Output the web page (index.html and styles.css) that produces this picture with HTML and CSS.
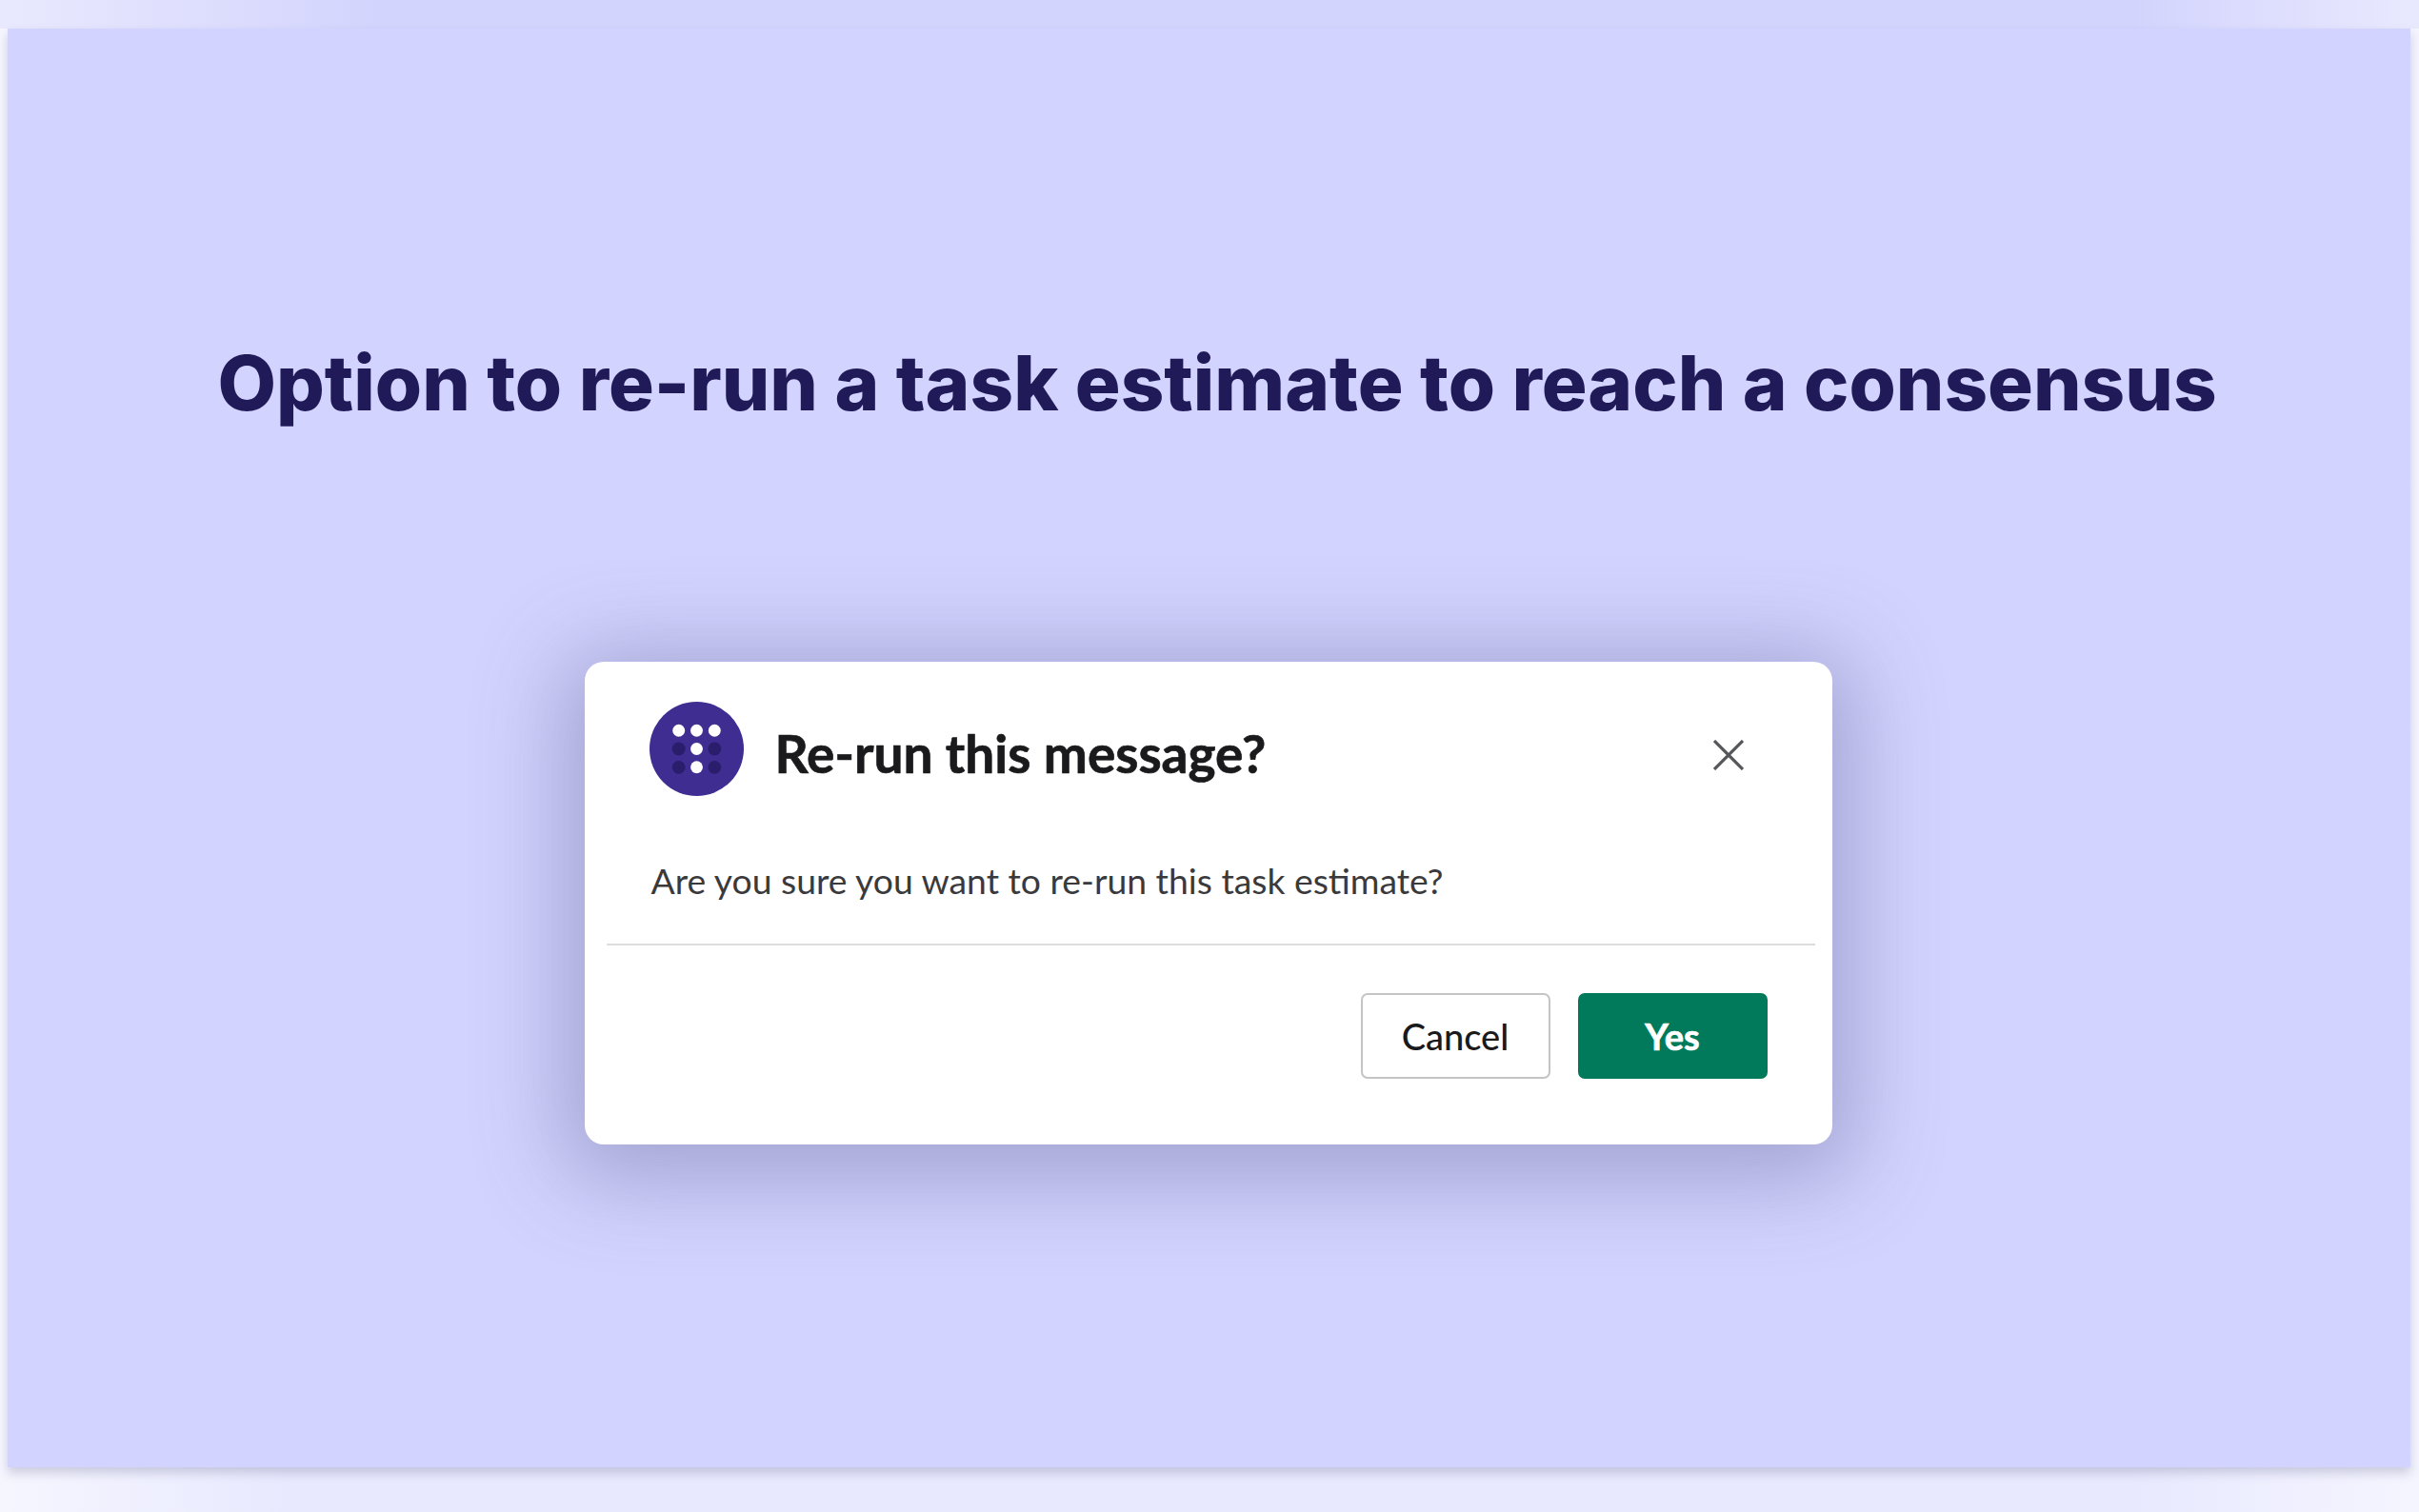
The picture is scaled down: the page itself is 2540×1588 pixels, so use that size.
FILE: index.html
```html
<!DOCTYPE html>
<html lang="en">
<head>
    <meta charset="UTF-8">
    <title>Re-run task estimate</title>
    <link rel="stylesheet" href="styles.css">
</head>
<body>
    <main class="panel">
        <h1 class="headline">Option to re-run a task estimate to reach a consensus</h1>

        <div class="dialog">
            <div class="dialog-head">
                <svg class="avatar" viewBox="0 0 100 100" aria-hidden="true">
                    <circle cx="50" cy="50" r="50" fill="#3f2d92"/>
                    <circle cx="31" cy="30.5" r="6.5" fill="#fff"/>
                    <circle cx="50" cy="30.5" r="6.5" fill="#fff"/>
                    <circle cx="69" cy="30.5" r="6.5" fill="#fff"/>
                    <circle cx="31" cy="50" r="7" fill="#2a1d6b"/>
                    <circle cx="50" cy="50" r="6.5" fill="#fff"/>
                    <circle cx="69" cy="50" r="7" fill="#2a1d6b"/>
                    <circle cx="31" cy="69.5" r="7" fill="#2a1d6b"/>
                    <circle cx="50" cy="69.5" r="6.5" fill="#fff"/>
                    <circle cx="69" cy="69.5" r="7" fill="#2a1d6b"/>
                </svg>
                <h2 class="dialog-title">Re-run this message?</h2>
                <svg class="close" viewBox="0 0 32 32" aria-hidden="true">
                    <path d="M1 1 L31 31 M31 1 L1 31" stroke="#55565a" stroke-width="3.2" fill="none"/>
                </svg>
            </div>
            <p class="dialog-text">Are you sure you want to re-run this task estimate?</p>
            <hr class="divider">
            <div class="buttons">
                <button class="btn btn-cancel" type="button">Cancel</button>
                <button class="btn btn-yes" type="button">Yes</button>
            </div>
        </div>
    </main>
</body>
</html>
```

FILE: styles.css
```css
html, body {
    height: 100%;
}
body {
    margin: 0;
    padding: 30px 9px 47px 8px;
    box-sizing: border-box;
    background: #f0f0fe;
    background-image:
        linear-gradient(to right, #e9e9fe 0, #d3d4fd 400px, #d3d4fd 2240px, #e9e9fe 2540px),
        linear-gradient(to right, #f6f6ff 0, #e8e9fe 300px, #e8e9fe 2240px, #f5f5ff 2540px);
    background-size: 100% 30px, 100% 100%;
    background-repeat: no-repeat;
    overflow: hidden;
}
.panel {
    height: 100%;
    background: #d2d3fe;
    box-shadow: 0 6px 10px rgba(110, 112, 150, 0.3);
    display: flex;
    flex-direction: column;
    align-items: center;
}
.headline {
    margin: 324px 0 0 17px;
    font-family: Inter, sans-serif;
    font-size: 79.7px;
    line-height: 96px;
    font-weight: 800;
    color: #201b58;
    white-space: nowrap;
}
.dialog {
    width: 1310px;
    height: 507px;
    margin: 245px 2px 0 0;
    box-sizing: border-box;
    padding: 42px 23px 0;
    background: #fff;
    border-radius: 20px;
    box-shadow: 0 14px 90px 24px rgba(100, 100, 150, 0.42);
    font-family: Lato, sans-serif;
}
.dialog-head {
    display: flex;
    align-items: center;
    padding: 0 70px 0 45px;
}
.avatar {
    width: 99px;
    height: 99px;
    flex: none;
}
.dialog-title {
    flex: 1;
    margin: 9px 0 0 33px;
    font-size: 55px;
    line-height: 64px;
    font-weight: 700;
    color: #1a1a1c;
    -webkit-text-stroke: 0.7px #1a1a1c;
}
.close {
    width: 32px;
    height: 32px;
    flex: none;
    margin-top: 12px;
}
.dialog-text {
    margin: 65px 0 0 47px;
    font-size: 37.3px;
    line-height: 48px;
    font-weight: 400;
    color: #3a3a3d;
}
.divider {
    margin: 42px -5px 0 0;
    border: none;
    border-top: 2px solid #dddddf;
}
.buttons {
    display: flex;
    justify-content: flex-end;
    gap: 29px;
    margin-top: 50px;
    padding-right: 45px;
}
.btn {
    width: 199px;
    height: 90px;
    border-radius: 7px;
    font-family: Lato, sans-serif;
    font-size: 38px;
}
.btn-cancel {
    background: #fff;
    border: 2px solid #c4c4c6;
    color: #1a1a1c;
    font-weight: 500;
}
.btn-yes {
    background: #007a5a;
    border: none;
    color: #fff;
    font-weight: 700;
    -webkit-text-stroke: 0.7px #fff;
}
```
